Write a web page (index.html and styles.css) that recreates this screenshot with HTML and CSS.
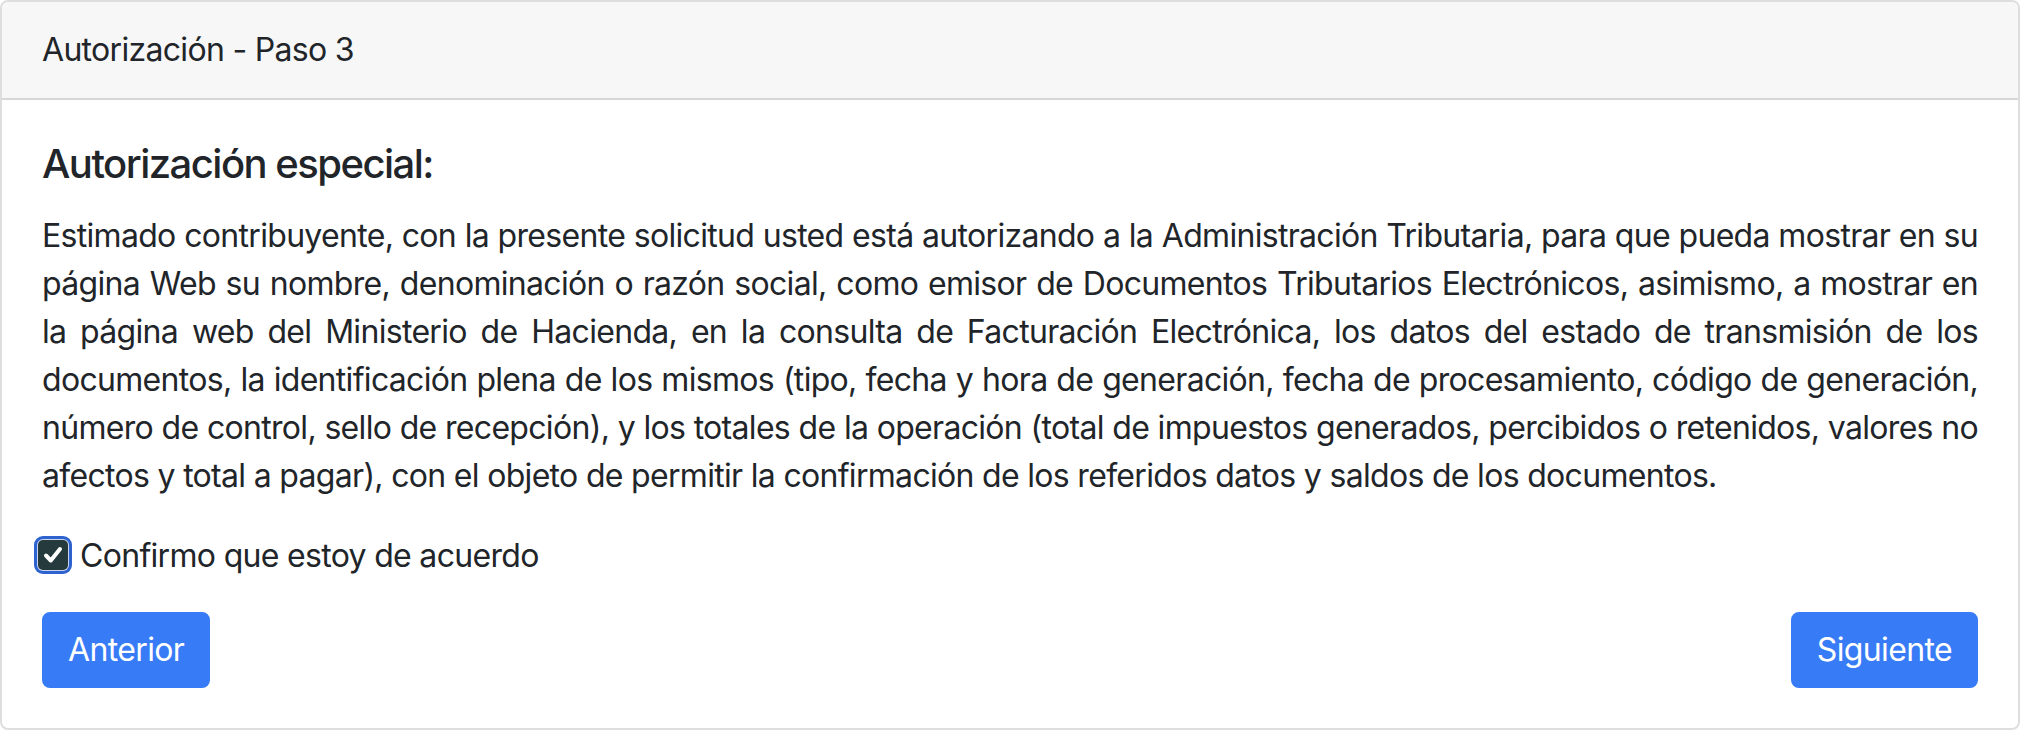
FILE: index.html
```html
<!DOCTYPE html>
<html lang="es">
<head>
    <meta charset="UTF-8">
    <meta name="viewport" content="width=device-width, initial-scale=1.0">
    <title>Autorización - Paso 3</title>
    <link rel="stylesheet" href="styles.css">
</head>
<body>
    <div class="card">
        <div class="card-header">Autorización - Paso 3</div>
        <div class="card-body">
            <h5 class="card-title">Autorización especial:</h5>
            <p class="card-text">
                <span class="line">Estimado contribuyente, con la presente solicitud usted está autorizando a la Administración Tributaria, para que pueda mostrar en su</span>
                <span class="line">página Web su nombre, denominación o razón social, como emisor de Documentos Tributarios Electrónicos, asimismo, a mostrar en</span>
                <span class="line">la página web del Ministerio de Hacienda, en la consulta de Facturación Electrónica, los datos del estado de transmisión de los</span>
                <span class="line">documentos, la identificación plena de los mismos (tipo, fecha y hora de generación, fecha de procesamiento, código de generación,</span>
                <span class="line">número de control, sello de recepción), y los totales de la operación (total de impuestos generados, percibidos o retenidos, valores no</span>
                <span class="line last">afectos y total a pagar), con el objeto de permitir la confirmación de los referidos datos y saldos de los documentos.</span>
            </p>

            <label class="form-check" for="acuerdo">
                <input type="checkbox" id="acuerdo" class="check-input" checked>
                <span class="check-box">
                    <span class="check-fill">
                        <svg viewBox="0 0 28 28" width="28" height="28">
                            <path d="M7 14.5 L11.8 19.5 L21 8" fill="none" stroke="#fff" stroke-width="4" stroke-linecap="round" stroke-linejoin="round"/>
                        </svg>
                    </span>
                </span>
                <span class="check-label">Confirmo que estoy de acuerdo</span>
            </label>

            <div class="actions">
                <button type="button" class="btn">Anterior</button>
                <button type="button" class="btn">Siguiente</button>
            </div>
        </div>
    </div>
</body>
</html>
```

FILE: styles.css
```css
body {
    margin: 0;
    padding: 0;
    font-family: Inter, "Noto Sans", sans-serif;
    letter-spacing: -0.043em;
    color: #212529;
    background-color: #fff;
}

.card {
    border: 2px solid rgba(0, 0, 0, 0.13);
    border-radius: 8px;
    overflow: hidden;
}

.card-header {
    padding: 24px 40px;
    background-color: #f7f7f7;
    border-bottom: 2px solid rgba(0, 0, 0, 0.13);
    font-size: 32px;
    line-height: 48px;
}

.card-body {
    padding: 40px;
}

.card-title {
    margin: 0 0 24px;
    font-size: 40px;
    font-weight: 500;
    line-height: 48px;
    letter-spacing: -0.038em;
}

.card-text {
    margin: 0 0 32px;
    font-size: 32px;
    line-height: 48px;
}

/* each line is justified edge to edge, the last one stays ragged */
.card-text .line {
    display: block;
    white-space: nowrap;
    text-align: justify;
    text-align-last: justify;
}

.card-text .last {
    text-align-last: left;
}

.form-check {
    display: flex;
    align-items: center;
    gap: 8px;
    margin-left: -8px;
    margin-bottom: 32px;
    font-size: 32px;
    line-height: 48px;
    cursor: pointer;
}

.check-input {
    display: none;
}

/* checked box with the focus ring around it */
.check-box {
    display: flex;
    width: 38px;
    height: 38px;
    box-sizing: border-box;
    padding: 4px;
    border-radius: 9px;
    background-color: #2d62cf;
    margin-top: -2px;
}

.check-fill {
    display: flex;
    align-items: center;
    justify-content: center;
    flex: 1;
    border-radius: 5px;
    background-color: #243a3c;
    box-shadow: 0 0 0 1px #c9d6ee;
}

.actions {
    display: flex;
    justify-content: space-between;
}

.btn {
    padding: 12px 24px;
    border: 2px solid #387bf6;
    border-radius: 8px;
    background-color: #387bf6;
    color: #fff;
    font-family: inherit;
    font-size: 32px;
    line-height: 48px;
    letter-spacing: -0.02em;
    cursor: pointer;
}
```
